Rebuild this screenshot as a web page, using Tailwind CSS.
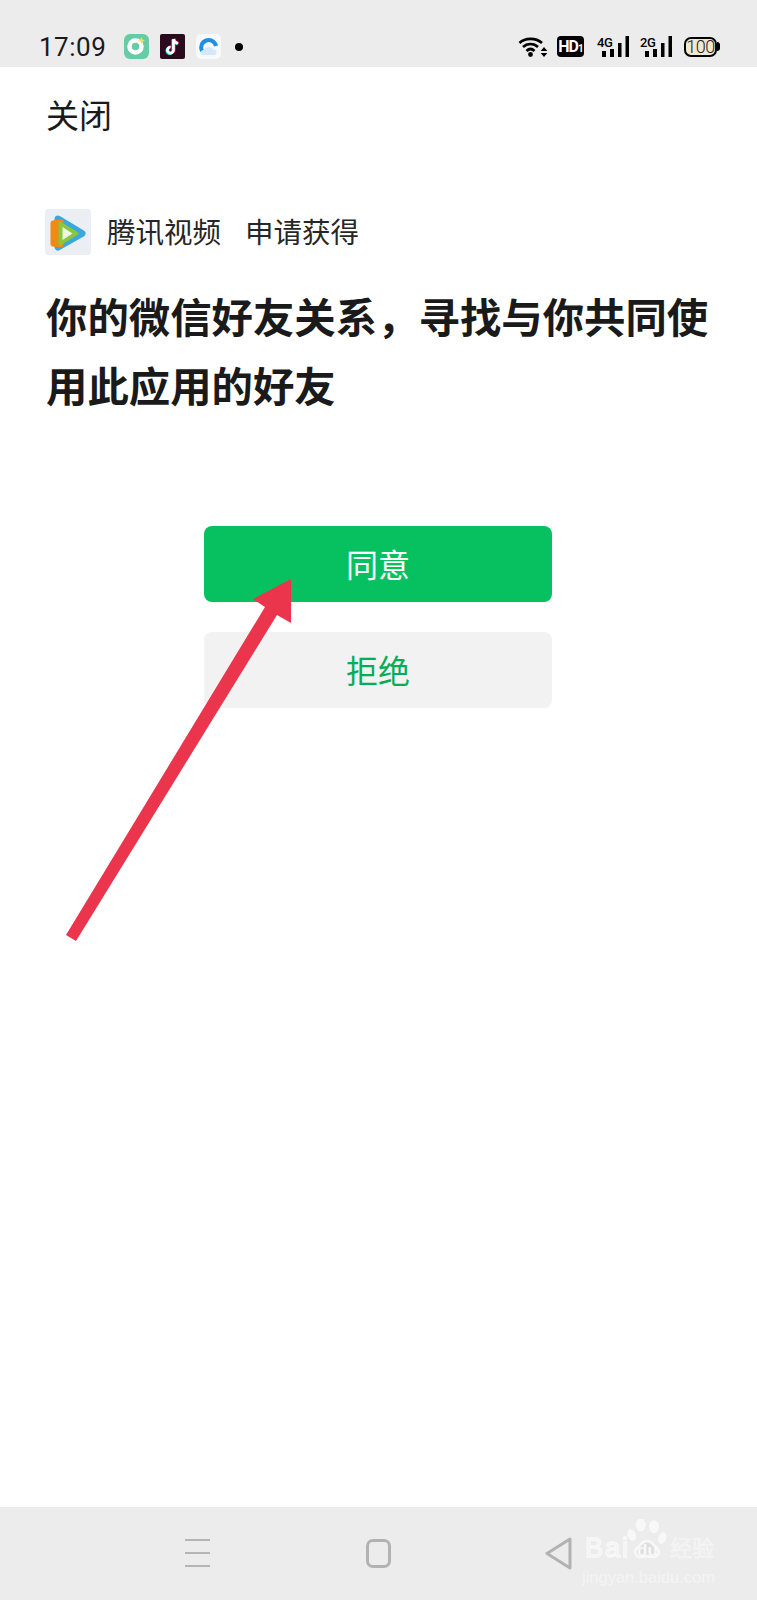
<!doctype html>
<html lang="zh">

<head>
    <meta charset="utf-8">
    <title>关闭</title>
    <script src="https://cdn.jsdelivr.net/npm/@tailwindcss/browser@4"></script>
</head>

<body class="bg-white font-['Roboto','Noto_Sans_CJK_SC',sans-serif]">
    <div class="relative flex flex-col w-[757px] h-[1600px] overflow-hidden">
        <!-- Status bar -->
        <div class="h-[67px] shrink-0 bg-[#ececec] flex items-center pl-[39px] pr-[37px] pt-[30px] pb-[4px]">
            <span class="text-[26px] leading-none text-[#1a1a1a] w-[85px] tracking-[0.5px]">17:09</span>
            <div class="flex items-center gap-[11px]">
                <svg class="w-[25px] h-[25px]" viewBox="0 0 25 25">
                    <rect width="25" height="25" rx="6" fill="#67cba6" />
                    <circle cx="11.500" cy="12.500" r="6" fill="none" stroke="#fff" stroke-width="4.500" />
                    <path d="M17.500 3l1 2.500 2.500 1-2.500 1-1 2.500-1-2.500-2.500-1 2.500-1z" fill="#f7e06a" />
                </svg>
                <svg class="w-[25px] h-[25px]" viewBox="0 0 25 25">
                    <rect width="25" height="25" rx="2" fill="#2a0a1c" />
                    <path d="M13.500 5v11a3 3 0 1 1-3-3M13.500 5c.4 2.500 2 4 4.500 4.300" fill="none" stroke="#25f4ee"
                        stroke-width="2.600" transform="translate(-.7 .6)" />
                    <path d="M13.500 5v11a3 3 0 1 1-3-3M13.500 5c.4 2.500 2 4 4.500 4.300" fill="none" stroke="#fe2c55"
                        stroke-width="2.600" transform="translate(.7 -.2)" />
                    <path d="M13.500 5v11a3 3 0 1 1-3-3M13.500 5c.4 2.500 2 4 4.500 4.300" fill="none" stroke="#fff"
                        stroke-width="2.600" />
                </svg>
                <svg class="w-[25px] h-[25px]" viewBox="0 0 25 25">
                    <rect width="25" height="25" rx="5" fill="#f7f9fb" />
                    <path d="M6 17A7.500 7.500 0 1 1 20 12" fill="none" stroke="#1d8fe8" stroke-width="4" />
                    <path d="M7 21c-3 0-3-5 1-5 1-4 8-4 9-.5 4-.5 5 5.500 1 5.500z" fill="#d3e9fb" />
                </svg>
                <span class="w-[8px] h-[8px] rounded-full bg-black ml-[3px]"></span>
            </div>
            <div class="ml-auto flex items-center">
                <svg class="w-[33px] h-[22px] mr-[6px]" viewBox="0 0 33 22">
                    <path d="M1.500 7C7 1.500 18 1.500 24 7M5 11c4-4 11-4 15 0M8.500 15c2.500-2.500 5.500-2.500 8 0" fill="none"
                        stroke="#000" stroke-width="2.600" />
                    <circle cx="12.500" cy="18.500" r="2.400" fill="#000" />
                    <path d="M26 11l3.300 4h-6.600zM26 21l-3.300-4h6.600z" fill="#000" />
                </svg>
                <span
                    class="w-[27px] h-[21px] rounded-[4px] bg-black text-white text-[16px] leading-[21px] font-bold text-center tracking-[-1px] font-['Roboto',sans-serif] mr-[12px]">HD<span
                        class="text-[10px]">1</span></span>
                <div class="relative w-[33px] h-[22px] mr-[11px]">
                    <span class="absolute left-[1px] top-[1px] text-[13px] leading-[12px] font-medium text-black tracking-[-0.5px]">4G</span>
                    <svg class="absolute inset-0 w-[33px] h-[22px]" viewBox="0 0 33 22">
                        <path d="M6 15h4v6H6zM14 13h4v8h-4zM22 7h3.500v14H22zM29.500 0H33v21h-3.500z" fill="#000" />
                    </svg>
                </div>
                <div class="relative w-[33px] h-[22px] mr-[11px]">
                    <span class="absolute left-0 top-[1px] text-[13px] leading-[12px] font-medium text-black tracking-[-0.5px]">2G</span>
                    <svg class="absolute inset-0 w-[33px] h-[22px]" viewBox="0 0 33 22">
                        <path d="M5 15h4v6H5zM13 13h4v8h-4zM21 7h3.500v14H21zM28.500 0H32v21h-3.500z" fill="#000" />
                    </svg>
                </div>
                <div class="flex items-center">
                    <span
                        class="w-[33px] h-[20px] rounded-[7px] border-2 border-black bg-[#f3e8cf] text-[18px] leading-[16px] font-light text-center text-[#222] tracking-[-0.5px]">100</span>
                    <span class="w-[3px] h-[9px] bg-black rounded-r-sm"></span>
                </div>
            </div>
        </div>

        <!-- Page -->
        <main class="flex-1 px-[46px] text-[#1a1a1a]">
            <div class="h-[100px] text-[33px] leading-[100px]">关闭</div>
            <div class="flex items-center mt-[42px] h-[46px]">
                <svg class="w-[46px] h-[46px] -ml-[1px]" viewBox="0 0 46 46">
                    <rect width="46" height="46" rx="3" fill="#ebeff3" />
                    <path d="M13 10L37 24.500 13 38z" fill="#3aa7de" stroke="#3aa7de" stroke-width="7"
                        stroke-linejoin="round" />
                    <path d="M8 14l8-1v23l-8-1z" fill="#f08a14" stroke="#f08a14" stroke-width="5"
                        stroke-linejoin="round" />
                    <path d="M15 14l17 10.500L15 35z" fill="#8cc63f" stroke="#8cc63f" stroke-width="3"
                        stroke-linejoin="round" />
                    <path d="M17.500 18l10 6.500-10 6.500z" fill="#eef5e0" />
                </svg>
                <span class="ml-[16px] pt-[4px] text-[28.500px] leading-none text-[#262626]">腾讯视频</span>
                <span class="ml-[24px] pt-[4px] text-[28.500px] leading-none text-[#262626]">申请获得</span>
            </div>
            <h1 class="mt-[30px] text-[41.400px] leading-[69px] font-bold text-[#1a1a1a] w-[670px]">
                你的微信好友关系，寻找与你共同使用此应用的好友</h1>
            <div class="flex flex-col items-center gap-[30px] mt-[103px] -ml-[1px]">
                <button class="w-[348px] h-[76px] pt-[3px] rounded-[8px] bg-[#07c160] text-white text-[32px]">同意</button>
                <button class="w-[348px] h-[76px] pt-[3px] rounded-[8px] bg-[#f2f2f2] text-[#06ad56] text-[32px]">拒绝</button>
            </div>
        </main>

        <!-- Nav bar -->
        <div class="h-[93px] shrink-0 bg-[#ececec] relative flex items-center pb-[1px]">
            <div class="flex flex-col gap-[10.500px] ml-[185px] w-[25px]">
                <span class="h-[2.500px] bg-[#b5b5b5]"></span>
                <span class="h-[2.500px] bg-[#b5b5b5]"></span>
                <span class="h-[2.500px] bg-[#b5b5b5]"></span>
            </div>
            <span class="ml-[156px] w-[25px] h-[29px] rounded-[7px] border-[3px] border-[#b2b2b2]"></span>
            <svg class="ml-[154px] w-[27px] h-[33px]" viewBox="0 0 27 33">
                <path d="M25 2L2 16.500 25 31z" fill="none" stroke="#b2b2b2" stroke-width="3"
                    stroke-linejoin="round" />
            </svg>
        </div>

        <!-- Arrow annotation over the page -->
        <svg class="absolute inset-0 w-[757px] h-[1600px] pointer-events-none" viewBox="0 0 757 1600">
            <path d="M66 935L265 607 253 599 291 579 291 623 277 615 76 941z" fill="#ea354c" />
        </svg>

        <!-- Watermark over the nav bar -->
        <div class="absolute left-[580px] top-[1518px] w-[140px] h-[64px] text-[#f1f1f1]">
            <span class="absolute left-[5px] top-[17px] text-[27px] leading-none tracking-[2px] [-webkit-text-stroke:1.500px_#f8f8f8] font-['Liberation_Sans',sans-serif]">Bai</span>
            <svg class="absolute left-[47px] top-[1px] w-[42px] h-[40px]" viewBox="0 0 42 40">
                <g fill="#f8f8f8">
                    <ellipse cx="13.700" cy="6" rx="5" ry="6.500" />
                    <ellipse cx="27" cy="7.700" rx="5" ry="6.500" />
                    <ellipse cx="4.700" cy="16" rx="4" ry="6" transform="rotate(-20 4.700 16)" />
                    <ellipse cx="35.300" cy="19" rx="4" ry="6" transform="rotate(20 35.300 19)" />
                </g>
                <path d="M20 22c5 0 6 4 10 7 4 4 1 9-4 9-4-1-8-1-12 0-5 0-8-5-4-9 4-3 5-7 10-7z" fill="#dedede"
                    stroke="#f8f8f8" stroke-width="2.500" />
            </svg>
            <span class="absolute left-[57px] top-[24px] text-[17px] leading-none font-bold text-[#f8f8f8] font-['Liberation_Sans',sans-serif]">du</span>
            <span class="absolute left-[90px] top-[20px] text-[22px] leading-none [-webkit-text-stroke:0.500px_#f8f8f8] whitespace-nowrap">经验</span>
            <span class="absolute left-[2px] top-[51px] text-[16.500px] leading-none text-[#f4f4f4] whitespace-nowrap font-['Liberation_Sans',sans-serif]">jingyan.baidu.com</span>
        </div>
    </div>
</body>

</html>
